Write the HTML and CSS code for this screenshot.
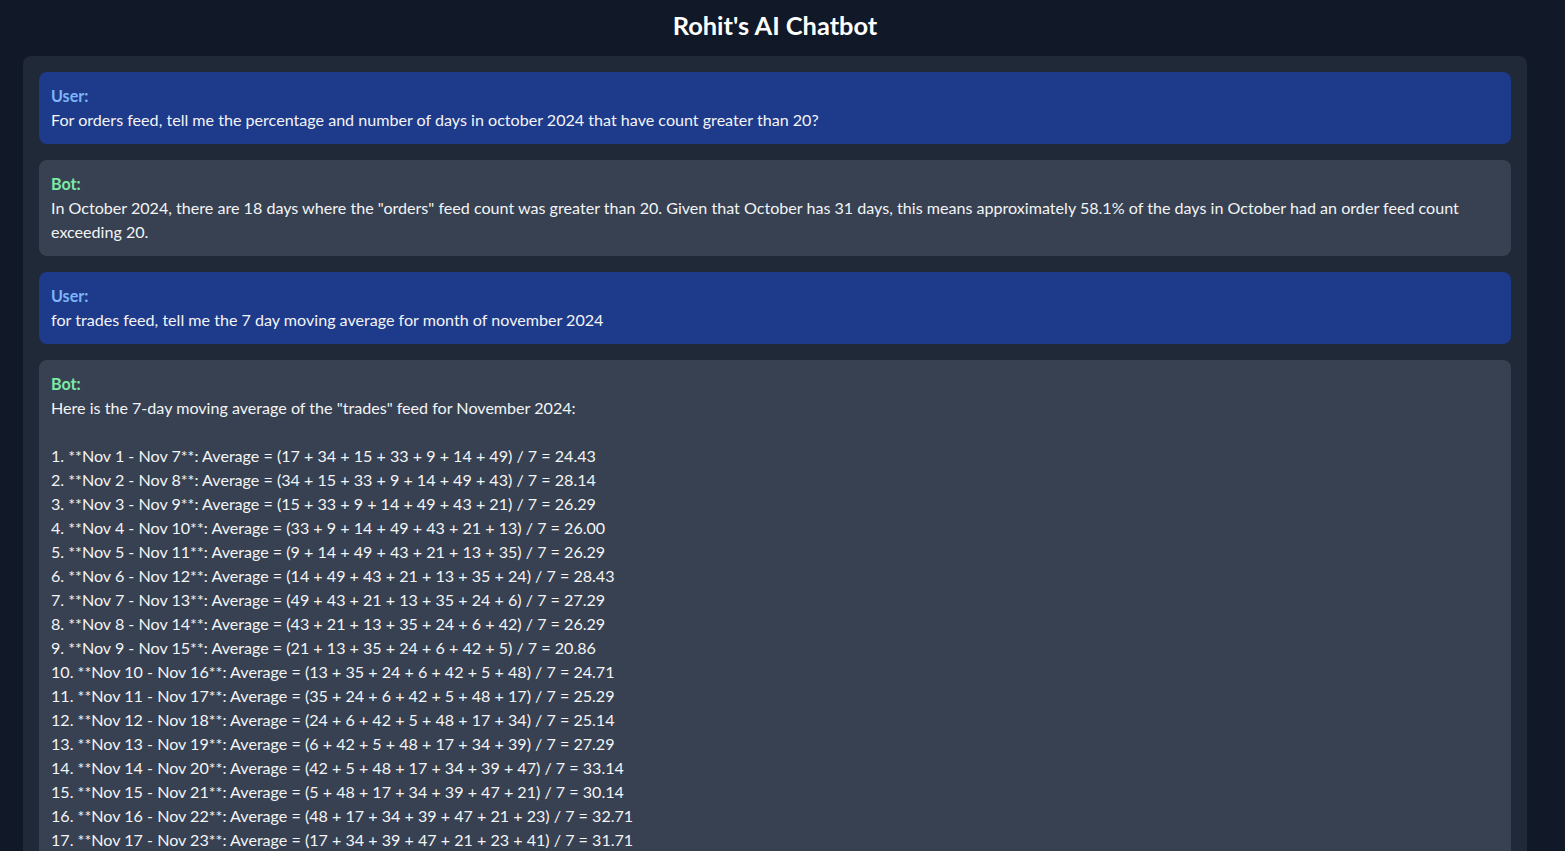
FILE: index.html
```html
<!DOCTYPE html>
<html lang="en">
<head>
<meta charset="utf-8">
<title>Rohit's AI Chatbot</title>
<link rel="stylesheet" href="styles.css">
</head>
<body>
<div class="page">
  <h1 class="title">Rohit's AI Chatbot</h1>
  <div class="chat">
    <div class="msg user">
      <div class="label">User:</div>
      <div class="text">For orders feed, tell me the percentage and number of days in october 2024 that have count greater than 20?</div>
    </div>
    <div class="msg bot">
      <div class="label">Bot:</div>
      <div class="text">In October 2024, there are 18 days where the "orders" feed count was greater than 20. Given that October has 31 days, this means approximately 58.1% of the days in October had an order feed count exceeding 20.</div>
    </div>
    <div class="msg user">
      <div class="label">User:</div>
      <div class="text">for trades feed, tell me the 7 day moving average for month of november 2024</div>
    </div>
    <div class="msg bot">
      <div class="label">Bot:</div>
      <div class="text">Here is the 7-day moving average of the "trades" feed for November 2024:

1. **Nov 1 - Nov 7**: Average = (17 + 34 + 15 + 33 + 9 + 14 + 49) / 7 = 24.43
2. **Nov 2 - Nov 8**: Average = (34 + 15 + 33 + 9 + 14 + 49 + 43) / 7 = 28.14
3. **Nov 3 - Nov 9**: Average = (15 + 33 + 9 + 14 + 49 + 43 + 21) / 7 = 26.29
4. **Nov 4 - Nov 10**: Average = (33 + 9 + 14 + 49 + 43 + 21 + 13) / 7 = 26.00
5. **Nov 5 - Nov 11**: Average = (9 + 14 + 49 + 43 + 21 + 13 + 35) / 7 = 26.29
6. **Nov 6 - Nov 12**: Average = (14 + 49 + 43 + 21 + 13 + 35 + 24) / 7 = 28.43
7. **Nov 7 - Nov 13**: Average = (49 + 43 + 21 + 13 + 35 + 24 + 6) / 7 = 27.29
8. **Nov 8 - Nov 14**: Average = (43 + 21 + 13 + 35 + 24 + 6 + 42) / 7 = 26.29
9. **Nov 9 - Nov 15**: Average = (21 + 13 + 35 + 24 + 6 + 42 + 5) / 7 = 20.86
10. **Nov 10 - Nov 16**: Average = (13 + 35 + 24 + 6 + 42 + 5 + 48) / 7 = 24.71
11. **Nov 11 - Nov 17**: Average = (35 + 24 + 6 + 42 + 5 + 48 + 17) / 7 = 25.29
12. **Nov 12 - Nov 18**: Average = (24 + 6 + 42 + 5 + 48 + 17 + 34) / 7 = 25.14
13. **Nov 13 - Nov 19**: Average = (6 + 42 + 5 + 48 + 17 + 34 + 39) / 7 = 27.29
14. **Nov 14 - Nov 20**: Average = (42 + 5 + 48 + 17 + 34 + 39 + 47) / 7 = 33.14
15. **Nov 15 - Nov 21**: Average = (5 + 48 + 17 + 34 + 39 + 47 + 21) / 7 = 30.14
16. **Nov 16 - Nov 22**: Average = (48 + 17 + 34 + 39 + 47 + 21 + 23) / 7 = 32.71
17. **Nov 17 - Nov 23**: Average = (17 + 34 + 39 + 47 + 21 + 23 + 41) / 7 = 31.71
18. **Nov 18 - Nov 24**: Average = (34 + 39 + 47 + 21 + 23 + 41 + 12) / 7 = 31.00</div>
    </div>
  </div>
</div>
</body>
</html>
```

FILE: styles.css
```css
html, body {
  margin: 0;
  padding: 0;
  background: #111827;
  color: #ffffff;
  font-family: Lato, "Noto Sans", sans-serif;
  font-size: 16.1px;
  line-height: 24px;
}

.page {
  padding: 0 38px 16px 23px;
}

.title {
  margin: 0;
  height: 56px;
  display: flex;
  align-items: center;
  justify-content: center;
  font-size: 25.4px;
  line-height: 32px;
  font-weight: 700;
  color: #ffffff;
  padding-bottom: 6px;
  box-sizing: border-box;
}

.chat {
  background: #1f2937;
  border-radius: 8px;
  padding: 16px;
  display: flex;
  flex-direction: column;
  gap: 16px;
}

.msg {
  border-radius: 8px;
  padding: 12px;
}

.msg.user {
  background: #1e3a8a;
}

.msg.bot {
  background: #374151;
}

.label {
  font-weight: 700;
}

.user .label {
  color: #7fb5f8;
}

.bot .label {
  color: #7eeaa8;
}

.text {
  color: #f3f4f6;
  white-space: pre-wrap;
}
```
